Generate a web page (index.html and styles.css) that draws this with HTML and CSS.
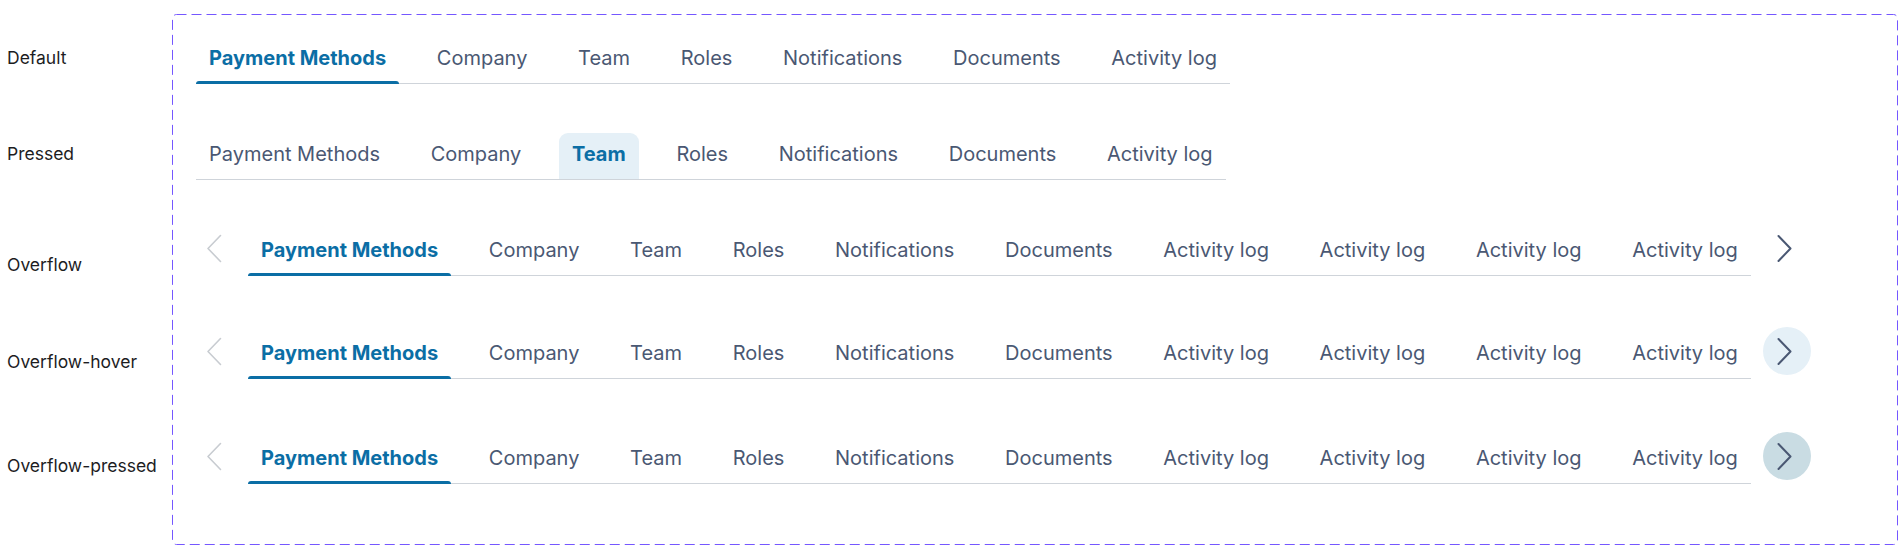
FILE: index.html
```html
<!DOCTYPE html>
<html lang="en">
<head>
<meta charset="utf-8">
<title>Tabs</title>
<link rel="stylesheet" href="styles.css">
</head>
<body>
<main class="sheet">
  <div class="frame" aria-hidden="true">
    <svg width="1726" height="531"><rect x="0.5" y="0.5" width="1725" height="530" rx="4" ry="4"></rect></svg>
  </div>

  <div class="label is-default">Default</div>
  <div class="row row--plain is-default">
    <div class="tabs" role="tablist">
      <button class="tab tab--active">Payment Methods</button>
      <button class="tab">Company</button>
      <button class="tab">Team</button>
      <button class="tab">Roles</button>
      <button class="tab">Notifications</button>
      <button class="tab">Documents</button>
      <button class="tab">Activity log</button>
    </div>
  </div>

  <div class="label is-pressed">Pressed</div>
  <div class="row row--plain is-pressed">
    <div class="tabs" role="tablist">
      <button class="tab">Payment Methods</button>
      <button class="tab">Company</button>
      <button class="tab tab--pressed">Team</button>
      <button class="tab">Roles</button>
      <button class="tab">Notifications</button>
      <button class="tab">Documents</button>
      <button class="tab">Activity log</button>
    </div>
  </div>

  <div class="label is-overflow">Overflow</div>
  <div class="row row--overflow is-overflow">
    <button class="scroll scroll--prev" aria-label="Previous"><svg viewBox="0 0 48 48"><path d="M32.5 11.5 L20 24.5 L32.5 37.5"></path></svg></button>
    <div class="tabs" role="tablist">
      <button class="tab tab--active">Payment Methods</button>
      <button class="tab">Company</button>
      <button class="tab">Team</button>
      <button class="tab">Roles</button>
      <button class="tab">Notifications</button>
      <button class="tab">Documents</button>
      <button class="tab">Activity log</button>
      <button class="tab">Activity log</button>
      <button class="tab">Activity log</button>
      <button class="tab">Activity log</button>
    </div>
    <button class="scroll scroll--next" aria-label="Next"><svg viewBox="0 0 48 48"><path d="M15.5 12 L27.5 24.5 L15.5 37"></path></svg></button>
  </div>

  <div class="label is-hover">Overflow-hover</div>
  <div class="row row--overflow is-hover">
    <button class="scroll scroll--prev" aria-label="Previous"><svg viewBox="0 0 48 48"><path d="M32.5 11.5 L20 24.5 L32.5 37.5"></path></svg></button>
    <div class="tabs" role="tablist">
      <button class="tab tab--active">Payment Methods</button>
      <button class="tab">Company</button>
      <button class="tab">Team</button>
      <button class="tab">Roles</button>
      <button class="tab">Notifications</button>
      <button class="tab">Documents</button>
      <button class="tab">Activity log</button>
      <button class="tab">Activity log</button>
      <button class="tab">Activity log</button>
      <button class="tab">Activity log</button>
    </div>
    <button class="scroll scroll--next scroll--hover" aria-label="Next"><svg viewBox="0 0 48 48"><path d="M15.5 12 L27.5 24.5 L15.5 37"></path></svg></button>
  </div>

  <div class="label is-opressed">Overflow-pressed</div>
  <div class="row row--overflow is-opressed">
    <button class="scroll scroll--prev" aria-label="Previous"><svg viewBox="0 0 48 48"><path d="M32.5 11.5 L20 24.5 L32.5 37.5"></path></svg></button>
    <div class="tabs" role="tablist">
      <button class="tab tab--active">Payment Methods</button>
      <button class="tab">Company</button>
      <button class="tab">Team</button>
      <button class="tab">Roles</button>
      <button class="tab">Notifications</button>
      <button class="tab">Documents</button>
      <button class="tab">Activity log</button>
      <button class="tab">Activity log</button>
      <button class="tab">Activity log</button>
      <button class="tab">Activity log</button>
    </div>
    <button class="scroll scroll--next scroll--pressed" aria-label="Next"><svg viewBox="0 0 48 48"><path d="M15.5 12 L27.5 24.5 L15.5 37"></path></svg></button>
  </div>
</main>
</body>
</html>
```

FILE: styles.css
```css
* { box-sizing: border-box; }

body {
  margin: 0;
  background: #ffffff;
  font-family: Inter, "Liberation Sans", sans-serif;
}

.sheet {
  display: grid;
  grid-template-columns: 172px 1726px;
  grid-template-rows: 70px 96px 96px 103px 105px 61px;
  padding-top: 14px;
}

.frame {
  grid-column: 2;
  grid-row: 1 / 7;
}
.frame svg { display: block; }
.frame rect {
  fill: none;
  stroke: #7557ff;
  stroke-width: 1;
  stroke-dasharray: 10 5;
}

.is-default { grid-row: 1; }
.is-pressed { grid-row: 2; }
.is-overflow { grid-row: 3; }
.is-hover { grid-row: 4; }
.is-opressed { grid-row: 5; }

.label {
  grid-column: 1;
  align-self: end;
  padding-left: 7px;
  font-size: 17.5px;
  line-height: 20px;
  color: #1d1d1f;
}
.label.is-default,
.label.is-pressed { margin-bottom: 16px; }
.label.is-overflow { margin-bottom: 1px; }
.label.is-hover { margin-bottom: 7px; }
.label.is-opressed { margin-bottom: 8px; }

.row {
  grid-column: 2;
  align-self: end;
  height: 56px;
  display: flex;
  align-items: center;
}
.row--plain {
  padding-left: 24px;
  align-items: flex-end;
}
.row--overflow {
  padding-left: 16px;
  gap: 12px;
}

.tabs {
  display: flex;
  gap: 24.7px;
  border-bottom: 1px solid #cfd4da;
}
.row--overflow .tabs { align-self: flex-end; }

.tab {
  position: relative;
  height: 46px;
  padding: 0 13px 4px;
  display: flex;
  align-items: center;
  border: 0;
  background: none;
  font-family: Inter, "Liberation Sans", sans-serif;
  font-size: 20px;
  font-weight: 400;
  line-height: 24px;
  color: #4a5873;
  white-space: nowrap;
  cursor: pointer;
}
.tab--active {
  color: #0b6ea5;
  font-weight: 700;
}
.tab--active::after {
  content: "";
  position: absolute;
  left: 0;
  right: 0;
  bottom: -1px;
  height: 3px;
  border-radius: 3px 3px 0 0;
  background: #0b6ea5;
}
.tab--pressed {
  color: #0b6ea5;
  font-weight: 700;
  background: #e5f0f7;
  border-radius: 9px 9px 0 0;
}

.scroll {
  flex: none;
  width: 48px;
  height: 48px;
  padding: 0;
  border: 0;
  border-radius: 50%;
  background: transparent;
  display: flex;
  align-items: center;
  justify-content: center;
  cursor: pointer;
}
.scroll svg {
  display: block;
  width: 48px;
  height: 48px;
}
.scroll path {
  fill: none;
  stroke-linecap: round;
  stroke-linejoin: round;
}
.scroll--prev path {
  stroke: #c8ccd1;
  stroke-width: 1.6;
}
.scroll--next path {
  stroke: #4a5873;
  stroke-width: 2;
}
.scroll--hover { background: #e5f0f7; }
.scroll--pressed { background: #c9dce3; }
```
